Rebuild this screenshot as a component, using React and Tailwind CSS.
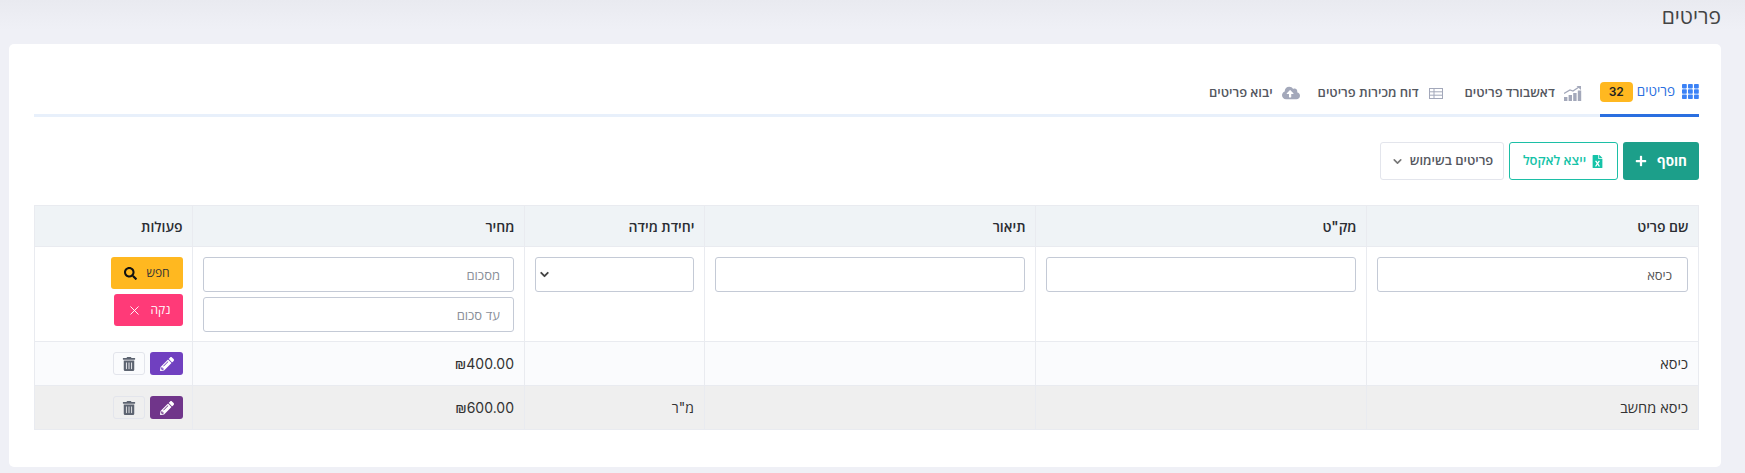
import { ChevronDown, X } from "lucide-react";
import { FaCloudUploadAlt, FaFileExcel, FaPencilAlt, FaPlus, FaSearch, FaTrashAlt } from "react-icons/fa";

const font = { fontFamily: 'Inter, "Open Sans", sans-serif' };

const headers = ["שם פריט", 'מק"ט', "תיאור", "יחידת מידה", "מחיר", "פעולות"];
const cell = "border border-[#e9ebf0]";

const GridIcon = () => (
  <svg width="17" height="15" viewBox="0 0 17 15" fill="#3b82f6">
    {[0, 5.3, 10.6].map((y) =>
      [0, 6, 12].map((x) => <rect key={`${x}-${y}`} x={x} y={y} width="4.8" height="4.4" rx="0.8" />)
    )}
  </svg>
);

const ChartIcon = () => (
  <svg width="18" height="15" viewBox="0 0 18 15" fill="#a3a8ba">
    <rect x="0" y="11" width="3.4" height="4" />
    <rect x="4.6" y="9" width="3.4" height="6" />
    <rect x="9.2" y="7" width="3.4" height="8" />
    <rect x="13.8" y="4.5" width="3.4" height="10.5" />
    <path d="M0 7.5 L6 4 L9 5 L15 1" stroke="#a3a8ba" strokeWidth="1.3" fill="none" />
    <path d="M12.5 0 L17 0 L17 4 Z" />
  </svg>
);

const TableIcon = () => (
  <svg width="14" height="11" viewBox="0 0 14 11" fill="none" stroke="#a3a8ba" strokeWidth="1">
    <rect x="0.5" y="0.5" width="13" height="10" />
    <path d="M0.5 3.8 H13.5 M0.5 7.2 H13.5 M5 0.5 V10.5" />
  </svg>
);

const TextInput = ({ placeholder, value }) => (
  <input
    readOnly
    dir="rtl"
    placeholder={placeholder}
    value={value}
    className={`block h-[35px] w-full rounded-[3px] border border-[#c4cad6] bg-white text-[13px] text-[#555] placeholder:text-[#8a8f99] ${placeholder ? "px-[13px]" : "px-[15px]"}`}
  />
);

const Row = ({ name, unit, price, shaded }) => (
  <tr className={`h-[44px] ${shaded ? "bg-[#efefef]" : "bg-[#fafbfd]"}`}>
    <td className={`${cell} px-[10px] text-[14.5px] text-[#333]`}>{name}</td>
    <td className={cell} />
    <td className={cell} />
    <td className={`${cell} px-[10px] text-[14px] text-[#333]`}>{unit}</td>
    <td className={`${cell} px-[10px] text-[14px] text-[#333]`}>₪{price}</td>
    <td className={`${cell} pr-[9px] pl-[10px]`}>
      <div className="flex items-center gap-[5px]">
        <button className={`flex h-[23px] w-[33px] items-center justify-center rounded-[3px] ${shaded ? "bg-[#70358a]" : "bg-[#7040c0]"}`}>
          <FaPencilAlt size={14} color="#fff" />
        </button>
        <button className="flex h-[23px] w-[32px] items-center justify-center rounded-[3px] border border-[#e3e5ec]">
          <FaTrashAlt size={14} color="#5c6370" />
        </button>
      </div>
    </td>
  </tr>
);

const App = () => {
  return (
    <div
      dir="rtl"
      style={font}
      className="h-[473px] w-full overflow-hidden bg-[linear-gradient(to_bottom,#e9eaf0,#eff0f6_30px)] pr-[24px] pl-[9px]"
    >
      <h1 className="h-[44px] pt-[2px] text-[21px] leading-[30px] font-normal text-[#444]">פריטים</h1>

      <div className="h-[423px] rounded-[5px] bg-white pt-[32px] pr-[22px] pl-[25px]">
        <nav className="flex h-[41px] items-center border-b-[3px] border-[#e8f0fb]">
          <div className="-mb-[3px] flex h-[41px] items-center gap-[4px] border-b-[3px] border-[#2a6fe0] pb-[7px]">
            <GridIcon />
            <span className="mr-[3px] text-[13.5px] font-medium text-[#2a6fe0]">פריטים</span>
            <span className="rounded-[4px] bg-[#ffb820] px-[9px] text-[12px] leading-[20px] font-semibold text-[#222]">32</span>
          </div>
          <div className="mr-[18px] mb-[4px] flex items-center gap-[9px] text-[13px] font-semibold text-[#55585f]">
            <ChartIcon />
            <span>דאשבורד פריטים</span>
          </div>
          <div className="mr-[22px] mb-[4px] flex items-center gap-[10px] text-[13px] font-semibold text-[#55585f]">
            <TableIcon />
            <span>דוח מכירות פריטים</span>
          </div>
          <div className="mr-[18px] mb-[4px] flex items-center gap-[9px] text-[13px] font-semibold text-[#55585f]">
            <FaCloudUploadAlt size={18} color="#a3a8ba" />
            <span>יבוא פריטים</span>
          </div>
        </nav>

        <div className="mt-[25px] flex gap-[5px]">
          <button className="flex h-[38px] w-[76px] items-center justify-center gap-[10px] rounded-[3px] bg-[#1c9f8a] text-[13.5px] font-bold text-white">
            <span>חוסף</span>
            <FaPlus size={12} />
          </button>
          <button className="flex h-[38px] w-[109px] items-center justify-center gap-[5px] rounded-[3px] border border-[#1cbfa6] bg-white text-[13px] font-semibold text-[#16c3a8]">
            <FaFileExcel size={13} />
            <span>ייצא לאקסל</span>
          </button>
          <button className="flex h-[38px] w-[124px] items-center justify-center gap-[6px] rounded-[3px] border border-[#e3e5ec] bg-white text-[13px] font-semibold text-[#55585f]">
            <span>פריטים בשימוש</span>
            <ChevronDown size={13} stroke="#777" strokeWidth={3} />
          </button>
        </div>

        <table className="mt-[25px] w-full table-fixed border-collapse">
          <colgroup>
            <col className="w-[332px]" />
            <col className="w-[331px]" />
            <col className="w-[331px]" />
            <col className="w-[180px]" />
            <col className="w-[332px]" />
            <col />
          </colgroup>
          <thead>
            <tr className="h-[41px] bg-[#eff3f6] text-right text-[14px] text-[#2b2d33]">
              {headers.map((head) => (
                <th key={head} className={`${cell} px-[9.5px] font-semibold`}>{head}</th>
              ))}
            </tr>
          </thead>
          <tbody>
            <tr className="h-[95px] bg-white align-top">
              <td className={`${cell} px-[10px] pt-[10px]`}><TextInput value="כיסא" /></td>
              <td className={`${cell} px-[10px] pt-[10px]`}><TextInput value="" /></td>
              <td className={`${cell} px-[10px] pt-[10px]`}><TextInput value="" /></td>
              <td className={`${cell} px-[10px] pt-[10px]`}>
                <div className="flex h-[35px] w-full items-center justify-end rounded-[3px] border border-[#c4cad6] bg-white pl-[2px]">
                  <ChevronDown size={13} stroke="#444" strokeWidth={3.5} />
                </div>
              </td>
              <td className={`${cell} px-[10px] pt-[10px]`}>
                <div className="flex flex-col gap-[5px]">
                  <TextInput placeholder="מסכום" />
                  <TextInput placeholder="עד סכום" />
                </div>
              </td>
              <td className={`${cell} pt-[10px] pr-[9px] pl-[10px]`}>
                <div className="flex flex-col items-start gap-[5px]">
                  <button className="flex h-[32px] w-[72px] items-center justify-center gap-[9px] rounded-[3px] bg-[#ffb820] text-[12px] text-[#333]">
                    <span>חפש</span>
                    <FaSearch size={13} color="#111" />
                  </button>
                  <button className="flex h-[32px] w-[69px] items-center justify-center gap-[9px] rounded-[3px] bg-[#ff3a78] text-[12px] text-white">
                    <span>נקה</span>
                    <X size={15} strokeWidth={1.5} />
                  </button>
                </div>
              </td>
            </tr>
            <Row name="כיסא" unit="" price="400.00" />
            <Row name="כיסא מחשב" unit={'מ"ר'} price="600.00" shaded />
          </tbody>
        </table>
      </div>
    </div>
  );
};

export default App;
